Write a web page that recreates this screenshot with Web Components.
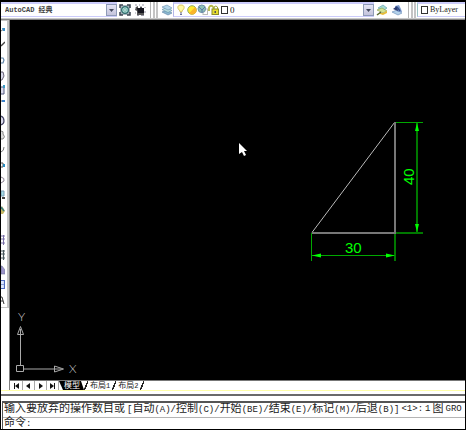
<!DOCTYPE html>
<html lang="zh-CN">
<head>
<meta charset="utf-8">
<title>AutoCAD</title>
<style>
html,body{height:100%}
body{margin:0;background:#000;font-family:"Liberation Mono","Noto Sans CJK SC",monospace}
</style>
</head>
<body>
<cad-app></cad-app>
<script>
const define = (name, html, setup) => customElements.define(name, class extends HTMLElement {
  connectedCallback() {
    if (this.shadowRoot) return;
    const t = document.createElement('template');
    t.innerHTML = html;
    this.attachShadow({mode: 'open'}).append(t.content.cloneNode(true));
    if (setup) setup(this, this.shadowRoot);
  }
});

const ICONS = {
  gear: '<path d="M1 1h10v10H1z" fill="#a9b4bc"/><path d="M1 4V1h3M8 1h3v3M1 8v3h3M8 11h3V8" stroke="#3c4450" stroke-width="1.500" fill="none"/><circle cx="6" cy="6" r="3.4" fill="#a8dcd2" stroke="#2f6a6c" stroke-width="1.200"/><circle cx="6" cy="6" r="1.300" fill="#e6fff8" stroke="#4c8a88" stroke-width=".6"/>',
  workspace: '<path d="M2 3l2-1v2h6v7H3V7L1 6z" fill="#555"/><path d="M3 4h3l1-2 1 2h2v5H4z" fill="#16161e"/><path d="M1 1h2M5 1h1M8 1h2M1 4h1M1 9h1M3 11.500h2M7 11.500h3M11 3v1M11 7v2" stroke="#9a9aa8"/>',
  layers: '<path d="M1 8l5-2 5 3-4 2z" fill="#8cb8d0" stroke="#5a82a4" stroke-width=".6"/><path d="M1 5.5l5-2 5 3-4 2z" fill="#b9dfdf" stroke="#5a8aa4" stroke-width=".6"/><path d="M1 3l5-2 5 3-4 2z" fill="#b4d6ea" stroke="#6a90ac" stroke-width=".6"/>',
  bulb: '<path d="M6 1C3 1 2.300 3 3.200 4.800L5 7v1h2V7l1.800-2.200C9.700 3 9 1 6 1z" fill="#fff8a0" stroke="#cdb74a" stroke-width=".8"/><path d="M5 9h2M5 10.500h2" stroke="#6b7098"/>',
  sun: '<circle cx="6" cy="6" r="4.300" fill="#ffe830" stroke="#86a85a" stroke-width=".9"/><path d="M3 9.300L9.300 3a4.300 4.300 0 0 1-6.300 6.300" fill="#f9b42a"/>',
  freeze: '<rect x="6" y="5" width="4.500" height="5.500" fill="#fff" stroke="#bbb"/><circle cx="4.800" cy="4.800" r="3.800" fill="#8cc0b4" stroke="#6f8fa8"/><path d="M2 3l3 3 3-3M5 6v2.500" stroke="#5a74ac" fill="none"/>',
  lock: '<path d="M1 7V3.500q2-3.500 4.500 0V5" stroke="#b4b848" stroke-width="1.800" fill="none"/><rect x="4" y="5" width="6.500" height="5.500" fill="#e6dc30" stroke="#8a8a2c"/><path d="M6 5V3q2-2 3.500 0v2" stroke="#9aa238" fill="none"/><path d="M6.500 7h1.500v2H6.500z" fill="#555"/>',
  square: '<rect x="2.5" y="2.5" width="6" height="7" fill="#fff" stroke="#333"/>',
  makeLayer: '<path d="M2 4l5-3 4 3-4 3z" fill="#a4d8d0" stroke="#5c9aac" stroke-width=".6"/><path d="M1 6l5-2 5 3-4 2z" fill="#d4e494" stroke="#84984a" stroke-width=".6"/><path d="M3 9l4 0 4-2v2l-4 2-3-1z" fill="#e8bc38"/><path d="M1 11l4-3" stroke="#5a6a30" stroke-width="1.500"/>',
  prevLayer: '<path d="M1 8l5-2 5 3-4 2z" fill="#b4d2ea" stroke="#6488b4" stroke-width=".6"/><path d="M4 2l4-1 2 4 1 3-4 0-3-3z" fill="#7f9ccc"/><path d="M2 5l4-3 1 5z" fill="#2b3a70"/><path d="M6 3l3 4" stroke="#34508c" stroke-width="1.500"/>'
};
const icon = n => `<svg width="12" height="12" viewBox="0 0 12 12" aria-hidden="true">${ICONS[n]}</svg>`;

define('tool-button', `<style>
:host{display:block;flex:none}
button{display:block;padding:0;border:0;background:none;width:12px;height:12px}
svg{display:block}
</style><button type="button"></button>`, (el, r) => {
  const b = r.querySelector('button');
  b.innerHTML = icon(el.getAttribute('icon'));
  b.setAttribute('aria-label', el.getAttribute('label'));
});

define('status-icon', `<style>:host{display:block;flex:none;width:11px;height:12px}svg{display:block}</style>`,
  (el, r) => r.append(document.createRange().createContextualFragment(icon(el.getAttribute('icon')))));

define('tool-combo', `<style>
:host{display:block;min-width:0}
.box{display:flex;align-items:center;height:12px;border:solid #ccccfb;border-width:2px 0 1px;background:#fff}
.lead{display:flex;flex:none}
select{flex:1;min-width:0;height:12px;padding:0;border:0;background:none;appearance:none;color:#222;font:7px/12px "Liberation Mono","Noto Sans CJK SC",monospace;outline:0}
:host([serif]) select{font:9px/12px "Liberation Serif",serif}
:host([serif][cut]) select{font-size:8px}
:host([han]) select{font-weight:bold;color:#444}
.arrow{flex:none;box-sizing:border-box;width:11px;height:12px;border:1px solid #8f9bb8;background:linear-gradient(#e3e3f4,#c4c4dc)}
.arrow svg{display:block}
:host([edge]) .box{border-left:1px solid #b4b8e8}
:host([cut]) .arrow{display:none}
:host([cut]) .box{border-left:1px solid #9bc4c4}
</style><div class="box"><span class="lead"><slot></slot></span><select></select><span class="arrow"><svg width="9" height="10"><path d="M2 4h5L4.500 7z" fill="#444a60"/></svg></span></div>`, (el, r) => {
  const s = r.querySelector('select');
  s.add(new Option(el.getAttribute('value')));
  s.setAttribute('aria-label', el.getAttribute('label'));
});

define('tool-bar', `<style>
:host{display:flex;flex:none;align-items:flex-start;height:16px;background:#fff;border-bottom:1px solid #c8c8c8;box-shadow:0 1px #858585;margin-bottom:1px;clip-path:inset(0 0 -1px 0)}
.first{width:116px;flex:none}
.layer{flex:1;margin:0 1px 0 0}
.color{width:48px;flex:none}
.pad{width:4px}
.pad.small{width:1px}
.tools{display:flex;gap:3px;padding:2px 2px 0}
.tools.one{padding:2px 0 0 2px}
.tools.pair{padding:2px 3px 0 1px}
.line{flex:none;width:1px;height:16px;margin:0 2px;background:#b4b4b4}
.grip{flex:none;box-sizing:border-box;width:5px;height:16px;margin-right:1px;border:solid #c4c4c4;border-width:0 2px}
</style>
<tool-combo class="first" han value="AutoCAD 经典" label="工作空间"><span class="pad"></span></tool-combo>
<div class="tools"><tool-button icon="gear" label="工作空间设置"></tool-button><tool-button icon="workspace" label="我的工作空间"></tool-button></div>
<span class="line"></span><span class="grip"></span>
<div class="tools one"><tool-button icon="layers" label="图层特性管理器"></tool-button></div>
<tool-combo class="layer" edge serif value="0" label="图层"><span class="pad small"></span><status-icon icon="bulb"></status-icon><status-icon icon="sun"></status-icon><status-icon icon="freeze"></status-icon><status-icon icon="lock"></status-icon><status-icon icon="square"></status-icon></tool-combo>
<div class="tools pair"><tool-button icon="makeLayer" label="将对象的图层置为当前"></tool-button><tool-button icon="prevLayer" label="上一个图层"></tool-button></div>
<span class="line"></span><span class="grip"></span>
<tool-combo class="color" cut serif value="ByLayer" label="颜色"><span class="pad small"></span><status-icon icon="square"></status-icon></tool-combo>`);

define('draw-bar', `<style>
:host{display:flex;flex-direction:column;flex:none;box-sizing:border-box;width:9px;background:#fff;border-right:1px solid #808080}
.strip{border:solid #c4c4c4;border-width:1px 2px 1px 0;padding-top:1px}
button,.gap{display:block;width:4px;height:15px;padding:0;border:0;background:none;overflow:hidden}
svg{display:block}
</style><div class="strip" role="toolbar" aria-label="绘图"></div>`, (el, r) => {
  const items = [
    ['直线','<path d="M0 9l3-2" stroke="#777"/><path d="M1 6h3v3H2z" fill="#3b8cc4"/>'],
    ['构造线','<path d="M0 9l4-4" stroke="#444" stroke-width="1.500"/>'],
    ['多段线','<path d="M0 6h2l1 2-1 3H0" stroke="#5f84a8" fill="none" stroke-width="1.200"/>'],
    ['正多边形','<path d="M0 5l2 0 1 4-2 4H0" stroke="#666074" fill="#dde"/>'],
    ['矩形','<path d="M0 5h3v7H0" stroke="#535a80" fill="#dde"/><path d="M2 3h2v3H2z" fill="#399bc4"/>'],
    ['圆弧','<path d="M0 4h2" stroke="#556"/><path d="M1 3h3v2H1z" fill="#3d84cc"/>'],
    ['圆','<path d="M0 4q3 1 3 5 0 3-3 4" stroke="#444565" fill="#dde" stroke-width="1.200"/>'],
    ['修订云线','<path d="M0 4q3 0 2 3 3 3 0 5H0" stroke="#888" fill="#ddd"/>'],
    ['样条曲线','<path d="M0 10q3-1 3-5" stroke="#777" fill="none"/>'],
    ['椭圆','<path d="M0 6h2v4H0" fill="none" stroke="#555"/><path d="M2 7h2v3H2z" fill="#258bc0"/>'],
    ['椭圆弧','<path d="M0 5q4 1 3 4l-3 2" stroke="#8a8090" fill="none"/>'],
    ['插入块','<path d="M0 4h3v5H0z" fill="#a3dbe5" stroke="#7b9bb4"/><path d="M1 10h3v2H1z" fill="#444"/>'],
    ['创建块','<path d="M0 6l1-2 3 5-2 3H0z" fill="#c8b864"/><path d="M0 5l3 4" stroke="#387c80" stroke-width="1.500"/>'],
    null,
    ['点','<path d="M0 4h4M0 7h4M0 11h4M2.500 3v10" stroke="#7a70a8"/>'],
    ['图案填充','<path d="M0 4h4M0 7h4M0 11h4M2.500 3v10" stroke="#4b595f" stroke-width="1.200"/>'],
    ['渐变色','<path d="M0 4h1l3 4v4H0z" fill="#9c94c8" stroke="#6e749b" stroke-width=".6"/>'],
    ['面域','<path d="M0 3.500h3.500v8H0" fill="#dde8ff" stroke="#506dc0" stroke-width="1.200"/><path d="M0 7.500h3" stroke="#88a0d8"/>'],
    ['多行文字','<path d="M0 5h1l2 7M0 9h2" stroke="#333" fill="none"/>']
  ];
  r.querySelector('.strip').innerHTML = items.map(i => i ? `<button type="button" aria-label="${i[0]}"><svg width="4" height="15">${i[1]}</svg></button>` : '<span class="gap"></span>').join('');
});

define('drawing-canvas', `<style>
:host{display:block;flex:1;min-width:0;min-height:0;background:#000;overflow:hidden}
svg{display:block;width:100%;height:100%}
text{font-family:"Liberation Sans",sans-serif}
.axis text{font-family:"Lato","Liberation Sans",sans-serif;font-weight:300}
</style>
<svg role="img" aria-label="直角三角形 30 × 40"><g transform="translate(-10 -20)" fill="none">
<path d="M312 232.500L394.500 122.500" stroke="#b8b8b8"/>
<path d="M395 122V234M312 233H396" stroke="#777" stroke-width="2"/>
<path d="M396 122.500H423M311.500 233V261M312 255.500H395" stroke="#00a800"/>
<path d="M417 123V232M395 234V261M396 233H423" stroke="#007800" stroke-width="2"/>
<g fill="#0f0"><path d="M417 123l2 8h-4zM417 232l2-8h-4zM312 255.500l9-2v4zM395 255.500l-9-2v4z"/>
<text x="345" y="253" font-size="15">30</text><text transform="translate(414 185) rotate(-90)" font-size="15">40</text></g>
<g stroke="#aaa"><path d="M16.500 365.500h7v6h-7zM20.500 365V335M24 369H54M17.500 334.500h6l-3-8zM20.500 329v5M54.500 366v6l9-3zM55 369h6"/></g>
<g class="axis" fill="#ccc" font-size="12"><text x="18" y="321">Y</text><text x="69" y="373">X</text></g>
<path d="M239 143v11l3-2 2 4 2-1-2-4h3z" fill="#fff"/>
</g></svg>`);

define('layout-tabs', `<style>
:host{display:flex;flex:none;height:9px;background:#fff;border-top:1px solid #777;padding-left:1px}
button{display:block;flex:none;padding:0;border:0;background:none;height:9px;color:#222;font:8px/9px "Liberation Mono","Noto Sans CJK SC",monospace}
.nav{box-sizing:border-box;width:12px;border-right:1px solid #aaa}
.nav svg{display:block}
.tabs{display:flex;overflow:hidden}
.tabs button{padding:0 2px;white-space:nowrap}
.tabs .on{background:#000;color:#fff;clip-path:polygon(0 0,calc(100% - 3px) 0,100% 100%,4px 100%);padding:0 4px 0 5px}
i{flex:none;width:4px;height:9px;background:linear-gradient(114deg,transparent 42%,#222 43%,#222 62%,transparent 63%)}
small{font:7px/9px "Liberation Mono",monospace}
</style>
<button class="nav" type="button" aria-label="第一个"><svg width="11" height="9"><path d="M3.500 2v6" stroke="#111"/><path d="M8 2v6L4 5z" fill="#111"/></svg></button>
<button class="nav" type="button" aria-label="上一个"><svg width="11" height="9"><path d="M7 2v6L3 5z" fill="#111"/></svg></button>
<button class="nav" type="button" aria-label="下一个"><svg width="11" height="9"><path d="M4 2v6l4-3z" fill="#111"/></svg></button>
<button class="nav" type="button" aria-label="最后一个"><svg width="11" height="9"><path d="M3 2v6l4-3z" fill="#111"/><path d="M7.500 2v6" stroke="#111"/></svg></button>
<div class="tabs" role="tablist"><button class="on" role="tab" aria-selected="true">模型</button><i></i><button role="tab">布局<small>1</small></button><i></i><button role="tab">布局<small>2</small></button><i></i></div>`);

define('command-line', `<style>
:host{display:block;flex:none;background:#fff;border-top:1px solid #ffffa8;padding-top:3px}
.frame{border-top:2px solid #6a6a6a;padding:5px 0 0 1px}
.inner{border:solid #555;border-width:2px 0 0 1px;overflow:hidden}
.log,.prompt{display:flex;box-sizing:border-box;padding-left:1px;white-space:nowrap;color:#222;font:9px/13px "Liberation Mono","Noto Sans CJK SC",monospace}
.log{gap:2px;height:15px;border-bottom:1px solid #b4b4b4}
.prompt{height:11px;line-height:11px}
.han{font-size:11px}
input{flex:1;min-width:0;height:11px;padding:0;border:0;outline:0;background:none;font:inherit}
</style>
<div class="frame"><div class="inner"><div class="log"></div><div class="prompt"><label for="cmd"><span class="han">命令</span>:</label><input id="cmd" autocomplete="off"></div></div></div>`, (el, r) => {
  const parts = ['输入要放弃的操作数目或','[自动(A)/控制(C)/开始(BE)/结束(E)/标记(M)/后退(B)]','<1>:','1','图','GRO'];
  const log = r.querySelector('.log');
  for (const p of parts) {
    const s = document.createElement('span');
    for (const run of p.match(/[\u4e00-\u9fff]+|[^\u4e00-\u9fff]+/g)) {
      if (/[\u4e00-\u9fff]/.test(run)) {
        const h = document.createElement('span');
        h.className = 'han';
        h.textContent = run;
        s.append(h);
      } else s.append(run);
    }
    log.append(s);
  }
});

define('cad-app', `<style>
:host{display:flex;flex-direction:column;box-sizing:border-box;height:100vh;padding:2px 1px 1px;background:#000;overflow:hidden}
.work{display:flex;flex:1;min-height:0}
.view{display:flex;flex-direction:column;flex:1;min-width:0}
</style><tool-bar></tool-bar><div class="work"><draw-bar></draw-bar><div class="view"><drawing-canvas></drawing-canvas><layout-tabs></layout-tabs></div></div><command-line></command-line>`);
</script>
</body>
</html>
